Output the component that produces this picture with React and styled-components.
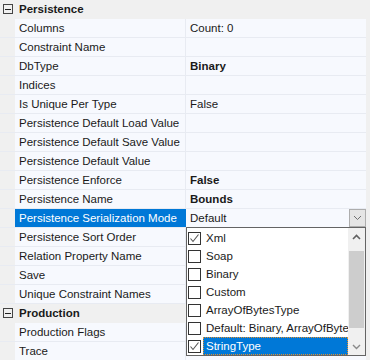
import React from 'react';
import styled, { createGlobalStyle } from 'styled-components';

const Global = createGlobalStyle`
  html, body {
    margin: 0;
    padding: 0;
    background: #f0f0f0;
  }
  body {
    font-family: 'Liberation Sans', 'Segoe UI', Arial, sans-serif;
    font-size: 11.5px;
    color: #1a1a1a;
  }
`;

const Frame = styled.div`
  position: relative;
  width: 370px;
  height: 360px;
  overflow: hidden;
  background: #f0f0f0;
`;

const Grid = styled.div`
  width: 366px;
  display: flex;
  flex-direction: column;
`;

const Row = styled.div`
  display: grid;
  grid-template-columns: 15px 170px 181px;
  height: 18px;
  border-bottom: 1px solid ${(p) => (p.$category ? '#f0f0f0' : '#e8ebf2')};
  background: ${(p) => (p.$category ? '#f0f0f0' : '#f7f9fe')};
`;

const Margin = styled.div`
  background: #f0f0f0;
  display: flex;
  align-items: center;
  justify-content: center;
`;

const Label = styled.div`
  display: flex;
  align-items: center;
  padding-left: 4px;
  white-space: nowrap;
  overflow: hidden;
  line-height: 18px;
  font-weight: ${(p) => (p.$bold ? 700 : 400)};
  background: ${(p) => (p.$selected ? '#0078d7' : 'transparent')};
  color: ${(p) => (p.$selected ? '#fff' : '#1a1a1a')};
`;

const Value = styled.div`
  display: flex;
  align-items: center;
  border-left: 1px solid ${(p) => (p.$active ? '#0078d7' : p.$category ? '#f0f0f0' : '#e8ebf2')};
  padding-left: 4px;
  white-space: nowrap;
  overflow: hidden;
  font-weight: ${(p) => (p.$bold ? 700 : 400)};
`;

const ValueText = styled.span`
  flex: 1;
`;

const ComboButton = styled.div`
  width: 15px;
  height: 16px;
  border: 1px solid #adadad;
  background: #e5e5e5;
  display: flex;
  align-items: center;
  justify-content: center;
`;

const Expander = styled.div`
  width: 8px;
  height: 8px;
  border: 1px solid #444;
  display: flex;
  align-items: center;
  justify-content: center;
  &::after {
    content: '';
    width: 6px;
    height: 1px;
    background: #222;
  }
`;

const Popup = styled.div`
  position: absolute;
  left: 186px;
  top: 227px;
  width: 178px;
  height: 127px;
  border: 1px solid #646464;
  background: #fff;
  display: flex;
`;

const List = styled.div`
  flex: 1;
  min-width: 0;
  overflow: hidden;
  display: flex;
  flex-direction: column;
  padding-top: 1px;
`;

const Item = styled.div`
  display: flex;
  align-items: center;
  height: 18px;
  padding-left: 1px;
  white-space: nowrap;
  overflow: hidden;
`;

const Box = styled.div`
  width: 11px;
  height: 11px;
  flex: none;
  border: 1px solid #333;
  background: #fff;
  display: flex;
  align-items: center;
  justify-content: center;
`;

const ItemText = styled.span`
  margin-left: 2px;
  padding: 0 2px;
  height: 16px;
  line-height: 16px;
  flex: ${(p) => (p.$selected ? 1 : 'none')};
  background: ${(p) => (p.$selected ? '#0078d7' : 'transparent')};
  color: ${(p) => (p.$selected ? '#fff' : '#1a1a1a')};
  border: 1px dotted ${(p) => (p.$selected ? '#e09030' : 'transparent')};
`;

const Scrollbar = styled.div`
  width: 17px;
  flex: none;
  background: #f0f0f0;
  display: flex;
  flex-direction: column;
  align-items: center;
`;

const Arrow = styled.div`
  height: 17px;
  width: 17px;
  display: flex;
  align-items: center;
  justify-content: center;
`;

const Track = styled.div`
  flex: 1;
  width: 17px;
  display: flex;
  flex-direction: column;
  padding: 6px 0 10px;
  box-sizing: border-box;
`;

const Thumb = styled.div`
  flex: 1;
  margin: 0 1px;
  background: #cdcdcd;
`;

const Chevron = ({ up, color = '#606060', width = 1.2 }) => (
  <svg width="9" height="6" viewBox="0 0 9 6">
    <polyline
      points={up ? '1,5 4.5,1.5 8,5' : '1,1 4.5,4.5 8,1'}
      fill="none"
      stroke={color}
      strokeWidth={width}
    />
  </svg>
);

const Check = () => (
  <svg width="11" height="11" viewBox="0 0 11 11">
    <polyline points="1.5,5.5 4,8.5 9.5,1.5" fill="none" stroke="#555" strokeWidth="1.1" />
  </svg>
);

const rows = [
  { cat: 'Persistence' },
  { name: 'Columns', value: 'Count: 0' },
  { name: 'Constraint Name' },
  { name: 'DbType', value: 'Binary', bold: true },
  { name: 'Indices' },
  { name: 'Is Unique Per Type', value: 'False' },
  { name: 'Persistence Default Load Value' },
  { name: 'Persistence Default Save Value' },
  { name: 'Persistence Default Value' },
  { name: 'Persistence Enforce', value: 'False', bold: true },
  { name: 'Persistence Name', value: 'Bounds', bold: true },
  { name: 'Persistence Serialization Mode', value: 'Default', selected: true },
  { name: 'Persistence Sort Order' },
  { name: 'Relation Property Name' },
  { name: 'Save' },
  { name: 'Unique Constraint Names' },
  { cat: 'Production' },
  { name: 'Production Flags' },
  { name: 'Trace' },
];

const options = [
  { label: 'Xml', checked: true },
  { label: 'Soap' },
  { label: 'Binary' },
  { label: 'Custom' },
  { label: 'ArrayOfBytesType' },
  { label: 'Default: Binary, ArrayOfBytesType' },
  { label: 'StringType', checked: true, selected: true },
];

export default function App() {
  return (
    <Frame>
      <Global />
      <Grid>
        {rows.map((r, i) =>
          r.cat ? (
            <Row key={i} $category>
              <Margin>
                <Expander />
              </Margin>
              <Label $bold>{r.cat}</Label>
              <Value $category />
            </Row>
          ) : (
            <Row key={i}>
              <Margin />
              <Label $selected={r.selected}>{r.name}</Label>
              <Value $bold={r.bold} $active={r.selected}>
                <ValueText>{r.value}</ValueText>
                {r.selected && (
                  <ComboButton>
                    <Chevron color="#707070" width={1} />
                  </ComboButton>
                )}
              </Value>
            </Row>
          )
        )}
      </Grid>
      <Popup>
        <List>
          {options.map((o) => (
            <Item key={o.label}>
              <Box>{o.checked && <Check />}</Box>
              <ItemText $selected={o.selected}>{o.label}</ItemText>
            </Item>
          ))}
        </List>
        <Scrollbar>
          <Arrow>
            <Chevron up color="#606060" width={1.6} />
          </Arrow>
          <Track>
            <Thumb />
          </Track>
          <Arrow>
            <Chevron color="#8a8a8a" width={1.4} />
          </Arrow>
        </Scrollbar>
      </Popup>
    </Frame>
  );
}
